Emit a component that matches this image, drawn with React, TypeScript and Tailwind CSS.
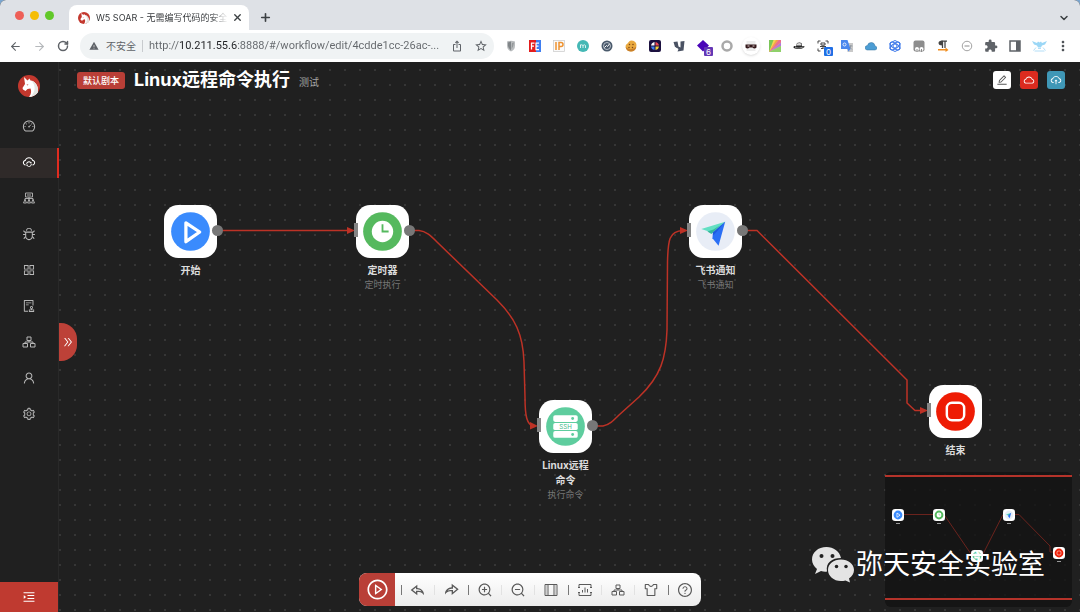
import type { ReactNode } from 'react';
import {
  AiOutlineAppstore,
  AiOutlineAudit,
  AiOutlineBug,
  AiOutlineCloud,
  AiOutlineCloudSync,
  AiOutlineCloudUpload,
  AiOutlineDashboard,
  AiOutlineDoubleRight,
  AiOutlineEdit,
  AiOutlineMenuUnfold,
  AiOutlinePlayCircle,
  AiOutlineQuestionCircle,
  AiOutlineSetting,
  AiOutlineSkin,
  AiOutlineUser,
  AiOutlineZoomIn,
  AiOutlineZoomOut,
} from 'react-icons/ai';
import { RiReplyLine, RiShareForwardLine } from 'react-icons/ri';
import { MdExtension, MdIosShare, MdMoreVert, MdStarBorder, MdWarning } from 'react-icons/md';
import { ArrowLeft, ArrowRight, ChevronDown, Plus, RotateCw, X } from 'lucide-react';

type NodeKind = 'start' | 'timer' | 'ssh' | 'feishu' | 'end';

interface FlowNode {
  kind: NodeKind;
  title: string;
  note?: string;
  x: number;
  y: number;
  input: boolean;
  output: boolean;
}

// positions are on the free canvas, measured from its top left corner
const nodes: FlowNode[] = [
  { kind: 'start', title: '开始', x: 105, y: 143, input: false, output: true },
  { kind: 'timer', title: '定时器', note: '定时执行', x: 297, y: 143, input: true, output: true },
  { kind: 'ssh', title: 'Linux远程命令', note: '执行命令', x: 480, y: 338, input: true, output: true },
  { kind: 'feishu', title: '飞书通知', note: '飞书通知', x: 630, y: 143, input: true, output: true },
  { kind: 'end', title: '结束', x: 870, y: 323, input: true, output: false },
];

const Logo = ({ className }: { className?: string }) => (
  <svg viewBox="0 0 44 44" className={className}>
    <circle cx="22" cy="22" r="22" fill="#c3382e" />
    <path
      d="M12 4 L19 11 L23 7 L25 11 C34 12 41 21 40 34 C35 41 29 44 22 44 C27 38 27 32 25 27 L19 28 L15 32 L10 29 L9 26 L14 18 Z"
      fill="#fff"
    />
    <path d="M27 12 C36 21 35 33 26 43 C33 42 38 38 40 34 C41 23 36 14 27 12 Z" fill="#e3e5e2" />
    <path d="M17 19 l4 0 -2 2 z" fill="#c3382e" />
  </svg>
);

const NetworkIcon = () => (
  <svg viewBox="0 0 24 24" fill="none" stroke="currentColor" strokeWidth="1.800" className="size-3">
    <path d="M5 2h14v8H5zM8 6h8M12 10v8M4 17v-4h16v4" />
    <path d="M4 15l-3 7h6zM12 15l-3 7h6zM20 15l-3 7h6z" />
  </svg>
);

const ClusterIcon = () => (
  <svg viewBox="0 0 28 28" fill="none" stroke="currentColor" strokeWidth="2" className="size-3.5">
    <path d="M10 4h8v7h-8zM2 17h9v7H2zM17 17h9v7h-9zM14 11v3M6 17v-3h16v3" />
  </svg>
);

const FrameIcon = () => (
  <svg viewBox="0 0 28 28" fill="none" stroke="currentColor" strokeWidth="2" className="size-3.5">
    <path d="M2 3h24v22H2zM8 3v22M20 3v22" />
    <path d="M5 3v22M23 3v22" strokeWidth="1" opacity=".5" />
  </svg>
);

const ChartFrameIcon = () => (
  <svg viewBox="0 0 28 28" fill="none" stroke="currentColor" strokeWidth="2" className="size-3.5">
    <path d="M2 9V3h24v6M2 19v6h24v-6M0 9h4M24 9h4M0 19h4M24 19h4M9 14v5M14 9v10M19 12v7" />
  </svg>
);

const NodeIcon = ({ kind, className }: { kind: NodeKind; className?: string }) => (
  <svg viewBox="0 0 52 52" className={className}>
    <rect width="52" height="52" rx="14" fill="#fff" />
    {kind === 'start' && (
      <>
        <circle cx="26" cy="26" r="19" fill="#3a8bfd" />
        <path d="M21.500 17.500 L35 26.500 L21.500 36 Z" fill="none" stroke="#fff" strokeWidth="3.200" strokeLinejoin="round" />
      </>
    )}
    {kind === 'timer' && (
      <>
        <circle cx="26" cy="26" r="19" fill="#55b95e" />
        <circle cx="26" cy="26" r="10.500" fill="#fff" />
        <path d="M26 19v7h6" fill="none" stroke="#55b95e" strokeWidth="1.800" />
      </>
    )}
    {kind === 'ssh' && (
      <>
        <circle cx="26" cy="26" r="19" fill="#5ecd9e" />
        <rect x="14" y="15" width="24" height="6.500" rx="1.800" fill="#fff" />
        <rect x="14" y="22.500" width="24" height="7" rx="1.800" fill="#fff" />
        <rect x="14" y="30.500" width="24" height="6.500" rx="1.800" fill="#fff" />
        <circle cx="33" cy="18.200" r="1.400" fill="#5ecd9e" />
        <circle cx="33" cy="33.800" r="1.400" fill="#5ecd9e" />
        <text x="26" y="28.200" textAnchor="middle" fontSize="6" fill="#3fb98a" fontFamily="Inter, sans-serif">SSH</text>
      </>
    )}
    {kind === 'feishu' && (
      <>
        <circle cx="26" cy="26" r="19" fill="#e8edf6" />
        <path d="M12 23.500 L35.500 16.500 L24 27.500 Z" fill="#62dfc3" />
        <path d="M18 26 L24 24 L30 20 L22 28.500 Z" fill="#36b89b" />
        <path d="M35.500 16.500 L29 40 L23 32.500 L23.500 27 Z" fill="#2a6ff5" />
        <path d="M35.500 16.500 L23.500 27 L23.500 30 L27 26.500 Z" fill="#1f5cdc" />
      </>
    )}
    {kind === 'end' && (
      <>
        <circle cx="26" cy="26" r="19" fill="#ee1c04" />
        <rect x="17.500" y="17.500" width="17" height="17" rx="5" fill="none" stroke="#fff" strokeWidth="2.400" />
      </>
    )}
  </svg>
);

const CanvasNode = ({ node }: { node: FlowNode }) => (
  <div className="absolute flex w-[53px] flex-col items-center" style={{ left: node.x, top: node.y }}>
    <NodeIcon kind={node.kind} className="size-[53px]" />
    {node.input && <span className="absolute top-[18px] -left-0.5 h-3.5 w-1 bg-[#858585]" />}
    {node.output && <span className="absolute top-5 -right-1.5 size-[11px] rounded-full bg-[#777]" />}
    <span className="mt-[5px] text-center text-[10px] leading-[15px] font-bold text-[#dcdcdc]">{node.title}</span>
    {node.note && <span className="text-[9px] leading-[13px] whitespace-nowrap text-[#777]">{node.note}</span>}
  </div>
);

const Edges = () => (
  <svg className="pointer-events-none absolute inset-0 h-full w-full" fill="none" stroke="#bd3226" strokeWidth="1.500">
    <path d="M158 168.500H289" />
    <path d="M350 168.500H360C367 169 372 174 378 180L438 238C456 256 464 272 465 300L466 335C466 355 468 362 474 364" />
    <path d="M533 364H544C550 363 554 359 560 353L580 335C602 314 607 296 608 268L608.500 200C609 178 610 169 624 168.500" />
    <path d="M683 168.500H698L848 318V341L856 348.500H864" />
    <g fill="#bd3226" stroke="none">
      <path d="M288 165l8 3.500-8 3.500z" />
      <path d="M471 360l8 4-8 3.500z" />
      <path d="M621 165l8 3.500-8 3.500z" />
      <path d="M861 345l8 3.500-8 3.500z" />
    </g>
  </svg>
);

const miniNodes: { kind: NodeKind; x: number; y: number }[] = [
  { kind: 'start', x: 7, y: 37 },
  { kind: 'timer', x: 48, y: 37 },
  { kind: 'ssh', x: 86, y: 78 },
  { kind: 'feishu', x: 118, y: 37 },
  { kind: 'end', x: 168, y: 75 },
];

const MiniMap = () => (
  <div className="absolute right-2 bottom-[5px] h-[135px] w-[187px] rounded-md bg-[#111]/75">
    <div className="absolute inset-x-0 top-[3px] h-[125px] border-y-2 border-[#b5332a]" />
    <svg className="absolute inset-0 h-full w-full" fill="none" stroke="#6b231d" strokeWidth="1">
      <path d="M18 42.500H48M59 42.500L86 82M98 82L118 42.500M130 42.500H134L165 74V80H169" />
    </svg>
    {miniNodes.map((node) => (
      <div key={node.kind} className="absolute flex flex-col items-center gap-0.5" style={{ left: node.x, top: node.y }}>
        <NodeIcon kind={node.kind} className="size-3" />
        <span className="h-px w-1 bg-[#999]" />
      </div>
    ))}
  </div>
);

const menu: { label: string; icon: ReactNode; active?: boolean }[] = [
  { label: 'dashboard', icon: <AiOutlineDashboard /> },
  { label: 'workflow', icon: <AiOutlineCloudSync />, active: true },
  { label: 'network', icon: <NetworkIcon /> },
  { label: 'bug', icon: <AiOutlineBug /> },
  { label: 'apps', icon: <AiOutlineAppstore /> },
  { label: 'audit', icon: <AiOutlineAudit /> },
  { label: 'cluster', icon: <ClusterIcon /> },
  { label: 'user', icon: <AiOutlineUser /> },
  { label: 'setting', icon: <AiOutlineSetting /> },
];

const Sidebar = () => (
  <aside className="flex w-[59px] shrink-0 flex-col border-r border-[#292929] bg-[#202020]">
    <Logo className="mx-auto mt-[13px] size-[22px]" />
    <nav className="mt-[15px] flex flex-col gap-1.5">
      {menu.map((item) => (
        <button
          key={item.label}
          aria-label={item.label}
          className={
            item.active
              ? 'relative -mr-px flex h-[30px] items-center justify-center border-r-2 border-[#e12c20] bg-[#2f2a29] pb-0.5 text-[14px] text-white'
              : 'flex h-[30px] items-center justify-center pb-0.5 text-[14px] text-[#b8b8b8]'
          }
        >
          {item.icon}
        </button>
      ))}
    </nav>
    <button aria-label="unfold" className="mt-auto flex h-[30px] items-center justify-center bg-[#bf3a30] text-[14px] text-white">
      <AiOutlineMenuUnfold />
    </button>
  </aside>
);

const tools: { label: string; icon: ReactNode; strong?: boolean }[] = [
  { label: 'undo', icon: <RiReplyLine />, strong: true },
  { label: 'redo', icon: <RiShareForwardLine /> },
  { label: 'zoom in', icon: <AiOutlineZoomIn />, strong: true },
  { label: 'zoom out', icon: <AiOutlineZoomOut /> },
  { label: 'frame', icon: <FrameIcon /> },
  { label: 'chart', icon: <ChartFrameIcon />, strong: true },
  { label: 'cluster', icon: <ClusterIcon /> },
  { label: 'skin', icon: <AiOutlineSkin /> },
  { label: 'help', icon: <AiOutlineQuestionCircle />, strong: true },
];

const Toolbar = () => (
  <div className="absolute bottom-1.5 left-[300px] flex h-[33px] w-[342px] overflow-hidden rounded-lg bg-linear-to-b from-white to-[#ececec]">
    <button aria-label="run" className="flex w-9 items-center justify-center bg-[#b93f37] text-[23px] text-white">
      <AiOutlinePlayCircle />
    </button>
    <div className="ml-1.5 flex flex-1 items-center">
      {tools.map((tool) => (
        <div key={tool.label} className="flex flex-1 items-center">
          <span className={tool.strong ? 'h-2.5 w-px bg-[#777]' : 'h-2.5 w-px bg-[#e2e2e2]'} />
          <button aria-label={tool.label} className="flex flex-1 justify-center text-[16px] text-[#5a5a5a]">
            {tool.icon}
          </button>
        </div>
      ))}
    </div>
  </div>
);

const Svg = ({ children }: { children: ReactNode }) => (
  <svg viewBox="0 0 24 24" className="size-3">
    {children}
  </svg>
);

const Badge = ({ children, className }: { children: ReactNode; className: string }) => (
  <span className={`absolute -right-1 -bottom-1 flex size-[9px] items-center justify-center rounded-[1px] text-[8px] leading-none text-white ${className}`}>
    {children}
  </span>
);

const extensions: { name: string; icon: ReactNode }[] = [
  {
    name: 'shield',
    icon: <Svg><path d="M4 3q8-3 16 0v8q0 9-8 12Q4 20 4 11z" fill="#b9bcbe" /><path d="M12 3v18q-5-4-6-9V5z" fill="#808588" /><path d="M14 6l4-1-2 8-3 5z" fill="#94989a" /></Svg>,
  },
  {
    name: 'FE',
    icon: (
      <Svg>
        <rect width="24" height="24" fill="#e21d1d" />
        <path d="M14 0h10v24H14z" fill="#3f7ef0" />
        <path d="M5 19V6h6M5 12h5M20 6h-6v13h6M14 12h5" fill="none" stroke="#fff" strokeWidth="2.500" />
      </Svg>
    ),
  },
  {
    name: 'IP',
    icon: (
      <Svg>
        <rect x="1" y="1" width="22" height="22" fill="#fafafa" stroke="#ccc" strokeWidth="1.500" />
        <path d="M6 4v16M12 20V5h4q4 0 4 4t-4 4h-4" fill="none" stroke="#ee9230" strokeWidth="3" />
      </Svg>
    ),
  },
  {
    name: 'm',
    icon: <Svg><circle cx="12" cy="12" r="12" fill="#45b8b5" /><path d="M7 16V9M7 11q2-3 5 0v5M12 11q3-3 5 0v5" fill="none" stroke="#fff" strokeWidth="1.600" /></Svg>,
  },
  {
    name: 'compass',
    icon: <Svg><circle cx="12" cy="12" r="11" fill="#49596b" /><circle cx="12" cy="12" r="7" fill="none" stroke="#d9dee4" strokeWidth="1.500" /><path d="M7 15l4-4 2 2 4-5" stroke="#fff" strokeWidth="2" fill="none" /></Svg>,
  },
  {
    name: 'cookie',
    icon: <Svg><path d="M12 1q10 0 11 9-1 12-11 13Q2 22 1 12 2 8 5 7q4-6 7-6z" fill="#e9a93f" /><path d="M1 14q11 9 22-1-2 10-11 10T1 14z" fill="#c9802a" /><g fill="#7c4413"><circle cx="9" cy="9" r="1.500" /><circle cx="16" cy="9" r="1.500" /><circle cx="8" cy="15" r="1.500" /><circle cx="15" cy="15" r="1.500" /></g></Svg>,
  },
  {
    name: 'wheel',
    icon: (
      <Svg>
        <rect width="24" height="24" rx="4" fill="#1c1140" />
        <path d="M11 4v7H4q1-6 7-7z" fill="#fff" /><path d="M13 4v7h7q-1-6-7-7z" fill="#ef4b56" />
        <path d="M11 20v-7H4q1 6 7 7z" fill="#3b7cf0" /><path d="M13 20v-7h7q-1 6-7 7z" fill="#f2d13b" />
      </Svg>
    ),
  },
  {
    name: 'axe',
    icon: <Svg><path d="M1 4l8-1 2 10 4 2V3l8-1-2 19-12 2 2-5-7-4z" fill="#4a5263" /><path d="M4 15l6 4" stroke="#fff" strokeWidth="1.500" /></Svg>,
  },
  {
    name: 'diamond',
    icon: <><Svg><path d="M12 0l12 11-12 12L0 11z" fill="#4a05b8" /></Svg><Badge className="bg-[#6437b5]">6</Badge></>,
  },
  {
    name: 'ring',
    icon: <Svg><circle cx="12" cy="12" r="9" fill="none" stroke="#a9a9a9" strokeWidth="5" /></Svg>,
  },
  {
    name: 'mask',
    icon: (
      <span className="flex size-[18px] items-center justify-center rounded-full bg-white shadow">
        <Svg><path d="M3 2h18v20H3z" fill="#ececec" /><path d="M1 9h22v6q-4 4-8 0h-6q-4 4-8 0z" fill="#34191b" /><path d="M5 12h4M15 12h4" stroke="#d9c9c9" strokeWidth="2" /></Svg>
      </span>
    ),
  },
  {
    name: 'palette',
    icon: (
      <Svg>
        <path d="M0 0h24v24H0z" fill="#f3d552" /><path d="M0 24V0h9z" fill="#7bc658" />
        <path d="M0 24L14 0h5z" fill="#f4a14a" /><path d="M0 24L19 0h5v5z" fill="#ec6f8e" /><path d="M0 24L24 5v7z" fill="#b178de" />
        <path d="M0 24l24-12v12z" fill="#8fd06a" />
      </Svg>
    ),
  },
  {
    name: 'hat',
    icon: <Svg><path d="M6 13l2-7q5-2 9 0l1 6q6 0 5 2-5 5-13 4-10-1-9-4 1-3 5-1z" fill="#222" /><path d="M8 7q5-2 8 0l1 4H7z" fill="#dcdcdc" /><path d="M4 15q8 3 16-1" stroke="#fff" fill="none" /></Svg>,
  },
  {
    name: 'scan',
    icon: (
      <>
        <Svg><path d="M2 7V2h5M17 2h5v5M2 17v5h5M8 6h8v4H8zM6 13h12M12 10v7M8 17h5" fill="none" stroke="#444" strokeWidth="2" /></Svg>
        <Badge className="bg-[#1f6fe5]">0</Badge>
      </>
    ),
  },
  {
    name: 'translate',
    icon: <Svg><path d="M10 6h14v18H13z" fill="#c9c9c9" /><path d="M0 0h13l6 18-4 5-2-5H0z" fill="#4b87ee" /><circle cx="7" cy="9" r="3" fill="none" stroke="#fff" strokeWidth="1.600" /><path d="M17 12h6M20 10l-2 7M17 14l5 5" stroke="#6f7a89" /></Svg>,
  },
  {
    name: 'cloud',
    icon: <Svg><path d="M4 20q-4-1-4-5 1-4 5-4 1-6 8-6 6 0 7 7 4 1 4 4t-4 4z" fill="#4c9dd4" stroke="#33719c" strokeWidth="1" /></Svg>,
  },
  {
    name: 'atom',
    icon: (
      <Svg>
        <g fill="none" stroke="#3d78ea" strokeWidth="2">
          <path d="M12 1l10 5v12l-10 5L2 18V6z" /><ellipse cx="12" cy="12" rx="11" ry="5" transform="rotate(35 12 12)" /><ellipse cx="12" cy="12" rx="11" ry="5" transform="rotate(-35 12 12)" /><circle cx="12" cy="12" r="4" />
        </g>
      </Svg>
    ),
  },
  {
    name: 'tamper',
    icon: <Svg><rect x="1" y="1" width="22" height="22" rx="4" fill="#8d8d8d" /><circle cx="8" cy="18" r="4" fill="#fff" /><circle cx="17" cy="18" r="4" fill="#fff" /><path d="M7 18h2v6H7zM16 18h2v6h-2z" fill="#8d8d8d" /></Svg>,
  },
  {
    name: 'pilcrow',
    icon: <Svg><path d="M20 2H9M11 3v13M16 3v13" fill="none" stroke="#444" strokeWidth="2.500" /><path d="M11 1q-8 0-8 5t8 5z" fill="#444" /><path d="M2 18h15v-3l6 5-6 4v-3H2z" fill="#f08c1d" /></Svg>,
  },
  {
    name: 'minus',
    icon: <Svg><circle cx="12" cy="12" r="9.500" fill="none" stroke="#a2a2a2" strokeWidth="2" /><path d="M7 12h10" stroke="#8c8c8c" strokeWidth="2" /></Svg>,
  },
  { name: 'extensions', icon: <MdExtension className="size-3.5 text-[#5f6368]" /> },
  {
    name: 'side panel',
    icon: <Svg><path d="M2 2h20v20H2z" fill="none" stroke="#5f6368" strokeWidth="3" /><path d="M14 2h8v20h-8z" fill="#5f6368" /></Svg>,
  },
  {
    name: 'profile',
    icon: (
      <svg viewBox="0 0 30 24" className="h-3 w-[15px] shrink-0">
        <path d="M0 2l10 4 2-3 3 2 3-2 2 3 10-4-4 7-6 2-2 4h-6l-2-4-6-2z" fill="#9bd7f6" />
        <path d="M8 15l-5 6M22 15l5 6M5 22h20M12 17h6" stroke="#b3def7" strokeWidth="2" />
      </svg>
    ),
  },
  { name: 'more', icon: <MdMoreVert className="size-4 text-[#4d5156]" /> },
];

const Browser = () => (
  <header className="font-[Inter,'Noto_Sans_CJK_SC',sans-serif]">
    <div className="flex h-[30px] items-end bg-[#dee1e6]">
      <div className="flex gap-1.5 self-center pl-[15px]">
        <span className="size-[9px] rounded-full bg-[#ee5f57]" />
        <span className="size-[9px] rounded-full bg-[#f5bd04]" />
        <span className="size-[9px] rounded-full bg-[#61c829]" />
      </div>
      <div className="ml-[15px] flex h-[25px] w-[180px] items-center rounded-t-lg bg-white pr-1.5 pl-[9px]">
        <Logo className="size-3 shrink-0" />
        <span className="ml-1.5 flex-1 overflow-hidden bg-linear-to-r from-[#303336] from-85% to-white bg-clip-text text-[9px] whitespace-nowrap text-transparent">
          W5 SOAR - 无需编写代码的安全
        </span>
        <button aria-label="close tab" className="ml-1"><X strokeWidth={3} className="size-[11px] text-[#3c4043]" /></button>
      </div>
      <button aria-label="new tab" className="mb-1.5 ml-2.5"><Plus strokeWidth={3} className="size-[13px] text-[#3c4043]" /></button>
      <button aria-label="tabs" className="mr-2.5 mb-1.5 ml-auto"><ChevronDown strokeWidth={3} className="size-3 text-[#3c4043]" /></button>
    </div>
    <div className="flex h-[33px] items-center border-b border-[#777] bg-white pr-[5px] text-[#5f6368]">
      <div className="flex w-20 shrink-0 items-center gap-[11px] pl-[9px]">
        <button aria-label="back"><ArrowLeft className="size-[13px]" /></button>
        <button aria-label="forward"><ArrowRight className="size-[13px] text-[#b5b8bb]" /></button>
        <button aria-label="reload"><RotateCw strokeWidth={3} className="size-3" /></button>
      </div>
      <div className="mr-[5px] flex h-[26px] flex-1 items-center rounded-full bg-[#f0f3f4] pr-1.5 pl-[9px]">
        <MdWarning className="size-2.5 shrink-0" />
        <label htmlFor="url" className="ml-[7px] shrink-0 border-r border-[#c8cbce] pr-1.5 text-[10px] leading-3">不安全</label>
        <input
          id="url"
          defaultValue="http://10.211.55.6:8888/#/workflow/edit/4cdde1cc-26ac-..."
          className="ml-1.5 min-w-0 flex-1 bg-[linear-gradient(90deg,#63676b_30px,#202124_30px,#202124_88px,#63676b_88px)] bg-clip-text font-[Roboto,sans-serif] text-[11px] text-transparent outline-none"
        />
        <button aria-label="share" className="ml-1"><MdIosShare className="size-3" /></button>
        <button aria-label="bookmark" className="ml-[11px]"><MdStarBorder className="size-3.5" /></button>
      </div>
      <div className="flex shrink-0">
        {extensions.map((ext) => (
          <button key={ext.name} aria-label={ext.name} className="flex h-[22px] w-6 items-center justify-center">
            <span className="relative flex">{ext.icon}</span>
          </button>
        ))}
      </div>
    </div>
  </header>
);

const App = () => {
  return (
    <div className="bg-[#7aa5cf]">
      <div className="flex min-h-screen flex-col overflow-hidden rounded-t-md bg-[#202020] font-[Inter,'Noto_Sans_CJK_SC',sans-serif]">
        <Browser />
        <div className="-mt-px flex flex-1">
          <Sidebar />
          <main className="relative flex-1 overflow-hidden bg-[#202020] bg-[radial-gradient(circle_at_1px_1px,#363636_1px,transparent_1px)] bg-size-[15px_15px] bg-position-[0_7px]">
            <div className="flex items-center px-[15px] pt-[5px] pl-[18px]">
              <span className="rounded-[3px] bg-[#b93f37] px-1.5 text-[9px] leading-[17px] font-medium text-white">默认剧本</span>
              <h1 className="ml-[9px] text-[18px] leading-[26px] font-bold text-white">Linux远程命令执行</h1>
              <span className="mt-1 ml-[9px] text-[10px] text-[#a5a5a5]">测试</span>
              <div className="ml-auto flex gap-[9px] text-xs text-white">
                <button aria-label="edit" className="flex size-[18px] items-center justify-center rounded-[3px] bg-white text-[#555]">
                  <AiOutlineEdit />
                </button>
                <button aria-label="cloud" className="flex size-[18px] items-center justify-center rounded-[3px] bg-[#dc2b1f]">
                  <AiOutlineCloud />
                </button>
                <button aria-label="upload" className="flex size-[18px] items-center justify-center rounded-[3px] bg-[#3f97b6]">
                  <AiOutlineCloudUpload />
                </button>
              </div>
            </div>
            <Edges />
            {nodes.map((node) => (
              <CanvasNode key={node.kind} node={node} />
            ))}
            <button aria-label="open panel" className="absolute top-[261px] left-0 flex h-[38px] w-[18px] items-center justify-center rounded-r-2xl bg-[#bd4138] text-xs text-white">
              <AiOutlineDoubleRight />
            </button>
            <Toolbar />
            <MiniMap />
            {/* Watermark */}
            <div className="absolute right-[35px] bottom-[29px] flex items-center gap-0.5 text-white">
              <svg viewBox="0 0 84 72" className="h-9 w-[42px]">
                <path d="M29 0C12 0 0 11 0 25c0 8 4 14 10 19l-4 10 12-6c4 1 8 2 12 1C27 31 40 22 58 22 55 8 43 0 29 0z" fill="#e4e4e4" />
                <path d="M58 25c-15 0-26 9-26 21s11 22 26 22c3 0 6 0 9-1l9 4-2-8c6-4 10-10 10-17 0-12-12-21-26-21z" fill="#e4e4e4" />
                <g fill="#222">
                  <circle cx="19" cy="18" r="4" />
                  <circle cx="41" cy="18" r="4" />
                  <circle cx="49" cy="39" r="3.500" />
                  <circle cx="68" cy="39" r="3.500" />
                </g>
              </svg>
              <span className="text-[27px] leading-9">弥天安全实验室</span>
            </div>
          </main>
        </div>
      </div>
    </div>
  );
};

export default App;
